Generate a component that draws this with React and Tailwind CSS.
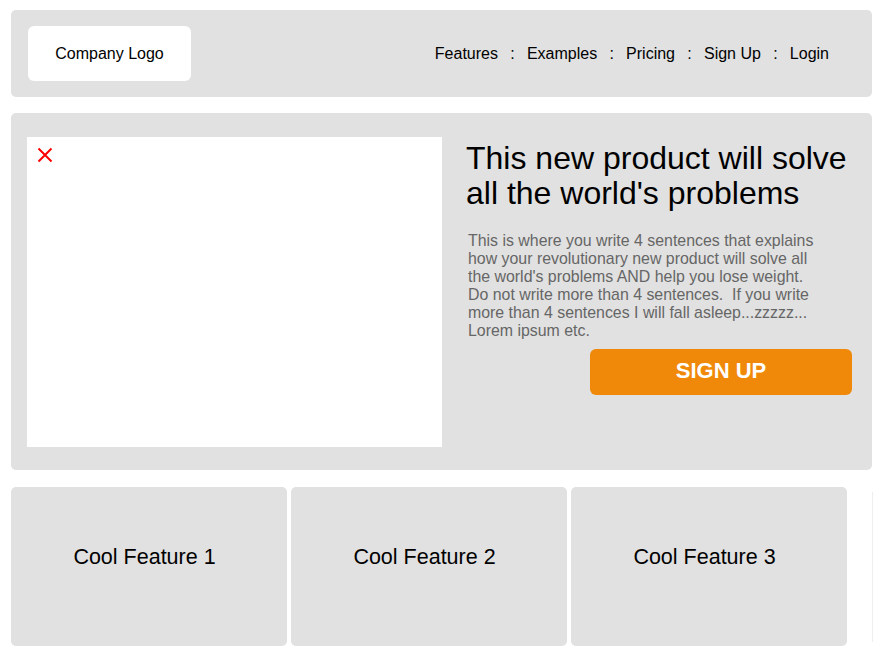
export default function App() {
    const links = ['Features', 'Examples', 'Pricing', 'Sign Up', 'Login'];
    const features = ['Cool Feature 1', 'Cool Feature 2', 'Cool Feature 3'];

    return (
        <div className="min-h-[657px] bg-white pl-[11px] pt-[10px] font-['Liberation_Sans',Arial,sans-serif] text-black">
            {/* Header */}
            <header className="w-[861px] h-[87px] bg-[#e1e1e1] rounded-[5px] flex items-center justify-between pl-[17px] pr-[43px]">
                <div className="w-[163px] h-[55px] bg-white rounded-[6px] flex items-center justify-center text-[16px]">
                    Company Logo
                </div>
                <nav className="flex items-center text-[16px]">
                    {links.map((l, i) => (
                        <div key={l} className="flex items-center">
                            {i > 0 && <span className="mx-[12.25px]">:</span>}
                            <a href="#" className="text-black">{l}</a>
                        </div>
                    ))}
                </nav>
            </header>

            {/* Hero */}
            <section className="mt-[16px] w-[861px] h-[357px] bg-[#e1e1e1] rounded-[5px] flex pl-[16px] pt-[24px] pr-[20px]">
                <div className="relative w-[415px] h-[310px] bg-white shrink-0">
                    <svg className="absolute left-[10px] top-[10px]" width="16" height="16" viewBox="0 0 16 16">
                        <path d="M1.5 1.5 L14.5 14.5 M14.5 1.5 L1.5 14.5" stroke="#ff0000" strokeWidth="2" fill="none" />
                    </svg>
                </div>
                <div className="ml-[24px] flex-1 flex flex-col">
                    <h1 className="mt-[4px] text-[32px] leading-[35px] font-normal">
                        This new product will solve all the world's problems
                    </h1>
                    <p className="mt-[21px] ml-[2px] w-[350px] text-[15.9px] leading-[18px] text-[#666666]">
                        This is where you write 4 sentences that explains how your revolutionary new product will solve all the world's problems AND help you lose weight. Do not write more than 4 sentences.&nbsp; If you write more than 4 sentences I will fall asleep...zzzzz... Lorem ipsum etc.
                    </p>
                    <div className="mt-[9px] flex justify-end">
                        <button className="w-[262px] h-[46px] bg-[#f0890a] rounded-[6px] text-white text-[22px] font-bold leading-[42px] pb-[2px]">
                            SIGN UP
                        </button>
                    </div>
                </div>
            </section>

            {/* Features */}
            <section className="mt-[17px] flex items-center">
                <div className="flex gap-[4px]">
                    {features.map((f) => (
                        <div key={f} className="w-[276px] h-[159px] bg-[#e1e1e1] rounded-[5px] flex items-center justify-center pb-[19px] pr-[9px] text-[21.5px]">
                            {f}
                        </div>
                    ))}
                </div>
                <div className="ml-[25px] w-px h-[150px] bg-[#eeeeee]" />
            </section>
        </div>
    );
}
